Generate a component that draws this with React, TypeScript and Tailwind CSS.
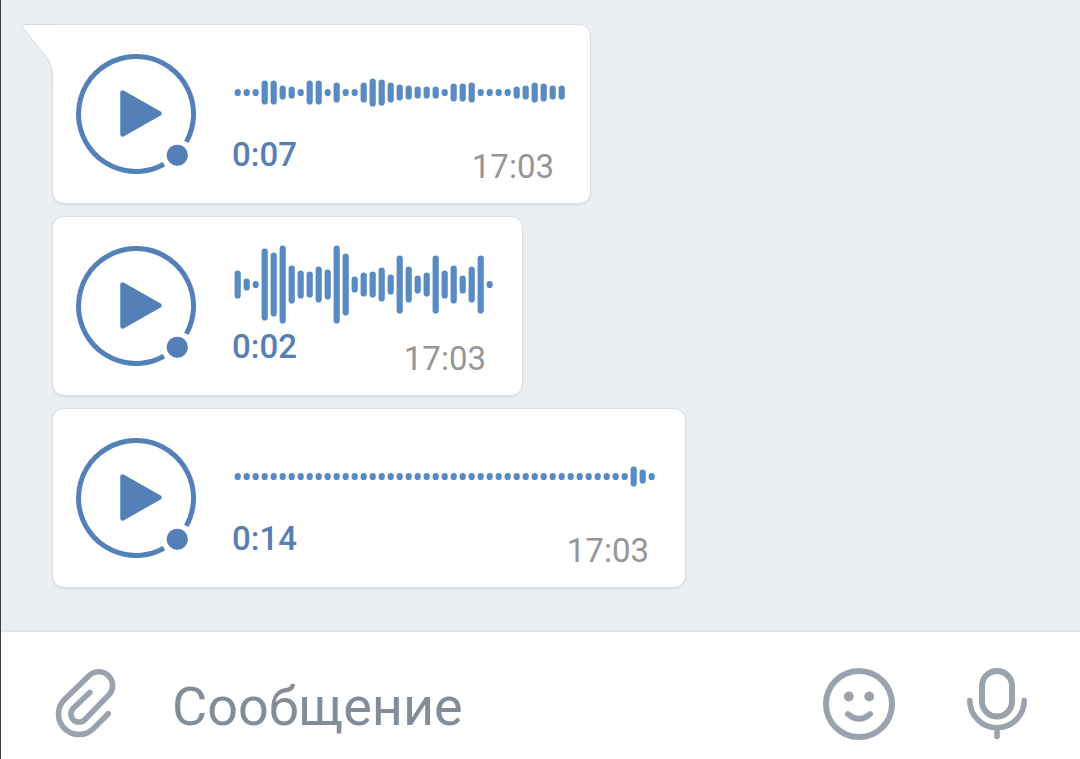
import { useState } from 'react'
import { clsx } from 'clsx'

interface VoiceMessage {
  id: number
  duration: string
  time: string
  peaks: number[]
  width: string
}

const messages: VoiceMessage[] = [
  {
    id: 1,
    duration: '0:07',
    time: '17:03',
    width: 'w-[539px]',
    peaks: [
      7, 7, 7, 24, 24, 14, 12, 7, 24, 24, 7, 20, 7, 7, 20, 28, 26, 20, 16, 14, 12, 12, 12, 7, 18, 18, 20, 7, 7, 7,
      7, 12, 14, 20, 18, 14, 14,
    ],
  },
  {
    id: 2,
    duration: '0:02',
    time: '17:03',
    width: 'w-[471px]',
    peaks: [
      28, 12, 7, 72, 64, 78, 38, 28, 26, 36, 30, 78, 62, 16, 24, 26, 34, 20, 58, 36, 18, 24, 58, 28, 38, 18, 36, 58, 7,
    ],
  },
  {
    id: 3,
    duration: '0:14',
    time: '17:03',
    width: 'w-[634px]',
    peaks: [...Array(44).fill(7), 20, 14, 7],
  },
]

const BAR_STEP = 9
const WAVE_HEIGHT = 85

function Waveform({ peaks }: { peaks: number[] }) {
  const width = peaks.length * BAR_STEP + 2

  return (
    <svg className="block shrink-0 fill-[#588bc3]" width={width} height={WAVE_HEIGHT} aria-hidden="true">
      {peaks.map((peak, i) => (
        <rect key={i} x={i * BAR_STEP + 2.6} y={(WAVE_HEIGHT - peak) / 2} width="6.2" height={peak} rx="3.1" />
      ))}
    </svg>
  )
}

function PlayIcon() {
  return (
    <svg className="size-[120px]" viewBox="0 0 120 120" fill="none" aria-hidden="true">
      <path d="M110.3 87.9A57.5 57.5 0 1 0 87.9 110.3" stroke="#5381b7" strokeWidth="5" />
      <path d="M46.500 38.500v42L83.500 59.500z" fill="#5381b7" stroke="#5381b7" strokeWidth="4.500" strokeLinejoin="round" />
      <circle cx="101.3" cy="101.3" r="10.6" fill="#5381b7" />
    </svg>
  )
}

function BubbleTail() {
  return (
    <svg className="absolute -left-8 -top-px h-16 w-9" viewBox="0 0 36 64" fill="none" aria-hidden="true">
      <path d="M36 1H3Q0 1 2 4L26 34Q32 42 32 54V64H36z" fill="#fff" />
      <path d="M36 .5H3Q0 .5 2 4L26 34Q31.500 42 31.500 54V64" stroke="#d5dae0" />
    </svg>
  )
}

function VoiceBubble({ message, first }: { message: VoiceMessage; first: boolean }) {
  return (
    <article
      className={clsx(
        'relative flex max-w-full gap-9 rounded-xl border border-[#d9dee4] bg-white pb-4 pl-[23px] pr-5 shadow-[0_1px_2px_rgba(0,0,0,0.08)]',
        first && 'rounded-tl-none',
        message.width,
      )}
    >
      {first && <BubbleTail />}
      <button type="button" aria-label="Воспроизвести" className="mt-[29px] shrink-0 self-start rounded-full">
        <PlayIcon />
      </button>
      <div className="min-w-0 flex-1 pt-[25px]">
        <Waveform peaks={message.peaks} />
        <div className="flex items-start justify-between pr-4 text-[33px] leading-10">
          <span className="font-medium text-[#5680b2]">{message.duration}</span>
          <time className="mt-3 text-[#959697]">{message.time}</time>
        </div>
      </div>
    </article>
  )
}

function ClipIcon() {
  return (
    <svg className="size-[72px]" viewBox="0 0 72 72" fill="none" aria-hidden="true">
      <path
        d="M58.300 45.700L43.500 60.500A20.500 20.500 0 0 1 14.500 31.500L39 7.700A13.800 13.800 0 0 1 58.500 27.300L34.700 51.700A8 8 0 0 1 23.300 40.300L39.800 24.500"
        stroke="#99a2ad"
        strokeWidth="5.600"
        strokeLinecap="round"
        strokeLinejoin="round"
      />
    </svg>
  )
}

function SmileIcon() {
  return (
    <svg className="size-[72px]" viewBox="0 0 72 72" fill="none" aria-hidden="true">
      <circle cx="36" cy="36" r="33" stroke="#99a2ad" strokeWidth="6" />
      <circle cx="25.800" cy="28.500" r="4.900" fill="#99a2ad" />
      <circle cx="46.200" cy="28.500" r="4.900" fill="#99a2ad" />
      <path d="M24.800 46Q36 55.500 47.200 46" stroke="#99a2ad" strokeWidth="5.600" strokeLinecap="round" />
    </svg>
  )
}

function MicIcon() {
  return (
    <svg className="size-[72px]" viewBox="0 0 72 72" fill="none" stroke="#99a2ad" aria-hidden="true">
      <rect x="21" y="3" width="30" height="45.500" rx="15" strokeWidth="6" />
      <path d="M8.800 32.500a27.200 27.200 0 0 0 54.400 0M36 59.700V68.500" strokeWidth="5.600" strokeLinecap="round" />
    </svg>
  )
}

export default function App() {
  const [text, setText] = useState('')

  return (
    <div className="flex min-h-screen flex-col border-l border-[#3c3f43] bg-[#eaeff4] font-[Roboto,sans-serif]">
      <main className="flex flex-1 flex-col items-start gap-3 pb-10 pl-[51px] pr-6 pt-6">
        {messages.map((message, i) => (
          <VoiceBubble key={message.id} message={message} first={i === 0} />
        ))}
      </main>
      <form
        className="flex items-center border-t-2 border-[#e1e5e8] bg-white pb-[19px] pl-[49px] pr-[47px] pt-9"
        onSubmit={(e) => e.preventDefault()}
      >
        <button type="button" aria-label="Прикрепить">
          <ClipIcon />
        </button>
        <input
          type="text"
          aria-label="Сообщение"
          placeholder="Сообщение"
          value={text}
          onChange={(e) => setText(e.target.value)}
          className="ml-[50px] h-[72px] min-w-0 flex-1 bg-transparent pt-1 text-[54px] text-[#222] outline-none placeholder:text-[#828d99]"
        />
        <button type="button" aria-label="Смайлы">
          <SmileIcon />
        </button>
        <button type="button" aria-label="Голосовое сообщение" className="ml-[66px]">
          <MicIcon />
        </button>
      </form>
    </div>
  )
}
